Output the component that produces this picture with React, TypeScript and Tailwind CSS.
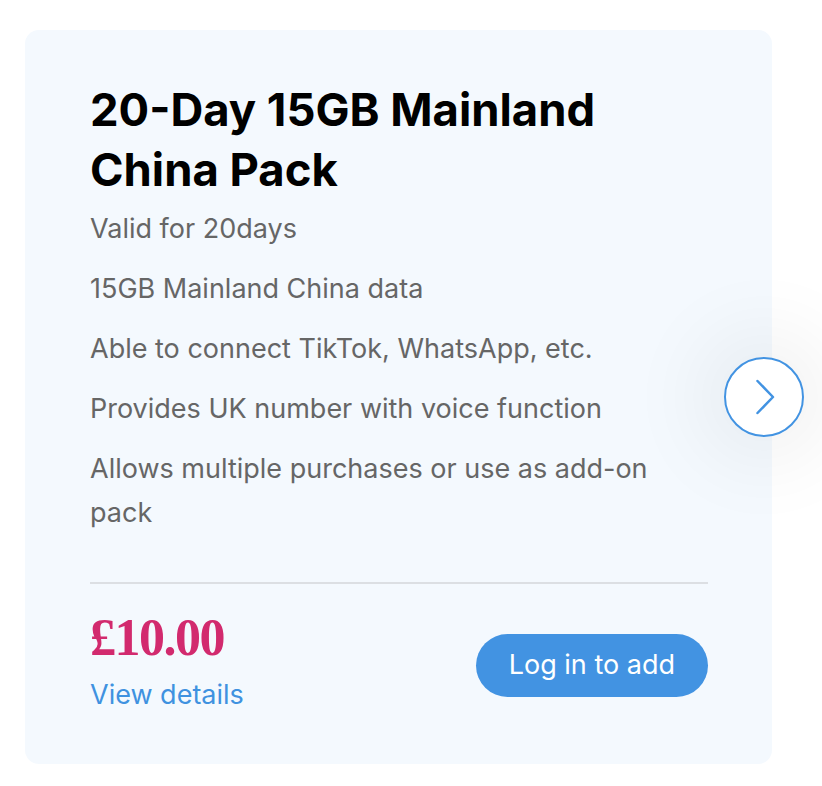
import React from 'react';

const features = [
  'Valid for 20days',
  '15GB Mainland China data',
  'Able to connect TikTok, WhatsApp, etc.',
  'Provides UK number with voice function',
  'Allows multiple purchases or use as add-on pack',
];

const App = () => {
  return (
    <div className="min-h-[786px] bg-white pt-[30px] pl-[25px] font-['Inter',sans-serif]">
      <div className="relative w-[747px]">
        {/* Card */}
        <div className="rounded-[14px] bg-[#f4f9fe] pl-[65px] pr-[64px] pt-[50px] pb-[49px]">
          <h2 className="text-[45.4px] font-bold leading-[60px] text-black">
            20-Day 15GB Mainland China Pack
          </h2>
          <ul className="mt-[7px] flex flex-col gap-[16px] text-[27px] leading-[44px] text-[#666666]">
            {features.map((f) => (
              <li key={f}>{f}</li>
            ))}
          </ul>
          <div className="mt-[47px] h-[2px] bg-[#dcdfe3]" />
          <div className="mt-[26px] flex items-end justify-between">
            <div className="flex flex-col">
              <span className="font-['Liberation_Serif',serif] text-[52px] font-bold leading-[56px] tracking-[-1.5px] text-[#d22a6e]">
                £10.00
              </span>
              <a href="#" className="mt-[9px] text-[27px] leading-[40px] text-[#3f92e0]">
                View details
              </a>
            </div>
            <button className="mb-[18px] h-[63px] rounded-full bg-[#4293e2] px-[33px] text-[27px] text-white">
              Log in to add
            </button>
          </div>
        </div>

        {/* Next arrow */}
        <button className="absolute left-[699px] top-[327px] flex h-[80px] w-[80px] items-center justify-center rounded-full border-2 border-[#4293e2] bg-white shadow-[0_0_80px_30px_rgba(0,0,0,0.05)]">
          <svg width="20" height="36" viewBox="0 0 20 36" fill="none" stroke="#4293e2" strokeWidth="2.5" strokeLinecap="round" strokeLinejoin="round" className="ml-[2px]">
            <path d="M2.5 2l15.5 16-15.5 16" />
          </svg>
        </button>
      </div>
    </div>
  );
};

export default App;
